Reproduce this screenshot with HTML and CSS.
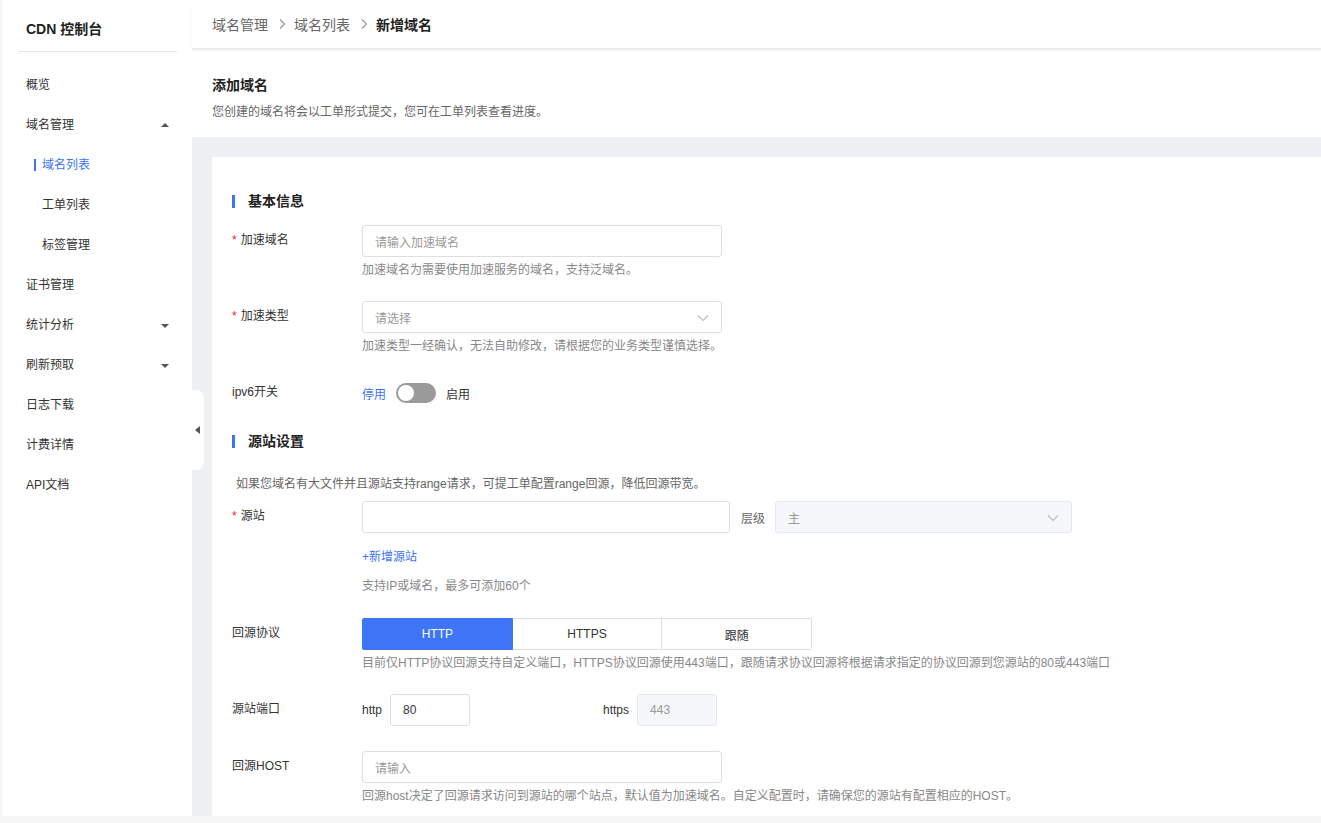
FILE: index.html
```html
<!DOCTYPE html>
<html lang="zh-CN">
<head>
<meta charset="utf-8">
<title>CDN 控制台 - 新增域名</title>
<link rel="stylesheet" href="styles.css">
</head>
<body>
<div class="app">
  <aside class="sidebar">
    <div class="brand">CDN 控制台</div>
    <nav class="menu">
      <div class="menu-item">概览</div>
      <div class="menu-item has-sub">域名管理<span class="tri tri-up"></span></div>
      <div class="sub-item active"><span class="bar"></span>域名列表</div>
      <div class="sub-item">工单列表</div>
      <div class="sub-item">标签管理</div>
      <div class="menu-item">证书管理</div>
      <div class="menu-item has-sub">统计分析<span class="tri tri-down"></span></div>
      <div class="menu-item has-sub">刷新预取<span class="tri tri-down"></span></div>
      <div class="menu-item">日志下载</div>
      <div class="menu-item">计费详情</div>
      <div class="menu-item">API文档</div>
    </nav>
    <div class="collapse-tab"><span class="tri-left"></span></div>
  </aside>
  <main class="main">
    <div class="breadcrumb">
      <span class="crumb">域名管理</span>
      <svg class="sep" width="8" height="12" viewBox="0 0 8 12"><path d="M2 1.5 L6.5 6 L2 10.5" fill="none" stroke="#999" stroke-width="1.2"/></svg>
      <span class="crumb">域名列表</span>
      <svg class="sep" width="8" height="12" viewBox="0 0 8 12"><path d="M2 1.5 L6.5 6 L2 10.5" fill="none" stroke="#999" stroke-width="1.2"/></svg>
      <span class="crumb current">新增域名</span>
    </div>
    <section class="page-head">
      <h1 class="page-title">添加域名</h1>
      <p class="page-desc">您创建的域名将会以工单形式提交，您可在工单列表查看进度。</p>
    </section>
    <section class="form-card">
      <h2 class="section-title">基本信息</h2>

      <div class="row">
        <div class="label"><span class="req">*</span>加速域名</div>
        <div class="ctrl">
          <div class="input w360"><span class="ph">请输入加速域名</span></div>
          <div class="help">加速域名为需要使用加速服务的域名，支持泛域名。</div>
        </div>
      </div>

      <div class="row">
        <div class="label"><span class="req">*</span>加速类型</div>
        <div class="ctrl">
          <div class="input w360 select"><span class="ph">请选择</span>
            <svg class="chev" width="12" height="8" viewBox="0 0 12 8"><path d="M1 1.5 L6 6.5 L11 1.5" fill="none" stroke="#b8bcc4" stroke-width="1.1"/></svg>
          </div>
          <div class="help">加速类型一经确认，无法自助修改，请根据您的业务类型谨慎选择。</div>
        </div>
      </div>

      <div class="row">
        <div class="label">ipv6开关</div>
        <div class="ctrl inline">
          <span class="sw-off">停用</span>
          <span class="switch"><span class="knob"></span></span>
          <span class="sw-on">启用</span>
        </div>
      </div>

      <h2 class="section-title second">源站设置</h2>
      <p class="info">如果您域名有大文件并且源站支持range请求，可提工单配置range回源，降低回源带宽。</p>

      <div class="row tight">
        <div class="label"><span class="req">*</span>源站</div>
        <div class="ctrl">
          <div class="inline">
            <div class="input w368"></div>
            <span class="level">层级</span>
            <div class="input w297 select disabled"><span class="val">主</span>
              <svg class="chev" width="12" height="8" viewBox="0 0 12 8"><path d="M1 1.5 L6 6.5 L11 1.5" fill="none" stroke="#b8bcc4" stroke-width="1.1"/></svg>
            </div>
          </div>
          <div class="add-link">+新增源站</div>
          <div class="help plain">支持IP或域名，最多可添加60个</div>
        </div>
      </div>

      <div class="row">
        <div class="label">回源协议</div>
        <div class="ctrl">
          <div class="btn-group">
            <span class="seg active">HTTP</span>
            <span class="seg">HTTPS</span>
            <span class="seg">跟随</span>
          </div>
          <div class="help">目前仅HTTP协议回源支持自定义端口，HTTPS协议回源使用443端口，跟随请求协议回源将根据请求指定的协议回源到您源站的80或443端口</div>
        </div>
      </div>

      <div class="row port-row">
        <div class="label">源站端口</div>
        <div class="ctrl inline">
          <span class="port-label">http</span>
          <div class="input w80"><span class="val dark">80</span></div>
          <span class="port-label https">https</span>
          <div class="input w80 disabled"><span class="val">443</span></div>
        </div>
      </div>

      <div class="row">
        <div class="label">回源HOST</div>
        <div class="ctrl">
          <div class="input w360"><span class="ph">请输入</span></div>
          <div class="help">回源host决定了回源请求访问到源站的哪个站点，默认值为加速域名。自定义配置时，请确保您的源站有配置相应的HOST。</div>
        </div>
      </div>
    </section>
  </main>
</div>
</body>
</html>
```

FILE: styles.css
```css
* { box-sizing: border-box; }
html, body { margin: 0; height: 100%; }
body {
  background: #f7f7f8;
  padding: 0 0 7px 3px;
  overflow: hidden;
  font-family: "Liberation Sans", Arial, "Noto Sans CJK SC", sans-serif;
  font-size: 12px;
  color: #333;
}
.app {
  display: flex;
  height: 816px;
}
.sidebar {
  position: relative;
  width: 189px;
  flex: none;
  background: #fff;
  padding: 0 15px;
}
.brand {
  height: 52px;
  line-height: 58px;
  padding-left: 8px;
  font-size: 14px;
  font-weight: bold;
  color: #222;
  border-bottom: 1px solid #e4e6eb;
}
.menu { padding-top: 13px; }
.menu-item, .sub-item {
  position: relative;
  height: 40px;
  line-height: 40px;
  padding-left: 8px;
  color: #333;
}
.sub-item { padding-left: 24px; }
.sub-item.active { color: #3d74f5; }
.sub-item .bar {
  position: absolute;
  left: 16px;
  top: 14px;
  width: 2px;
  height: 12px;
  background: #3d74f5;
}
.tri {
  position: absolute;
  right: 8px;
  top: 18px;
  width: 0; height: 0;
  border-left: 4px solid transparent;
  border-right: 4px solid transparent;
}
.tri-up { border-bottom: 4px solid #555; }
.tri-down { border-top: 4px solid #555; top: 19px; }
.collapse-tab {
  position: absolute;
  left: 189px;
  top: 390px;
  width: 12px;
  height: 80px;
  background: #fff;
  border-radius: 0 8px 8px 0;
  z-index: 2;
}
.tri-left {
  position: absolute;
  left: 3px;
  top: 36px;
  width: 0; height: 0;
  border-top: 4px solid transparent;
  border-bottom: 4px solid transparent;
  border-right: 5px solid #555;
}
.main {
  flex: 1;
  background: #eef0f4;
  display: flex;
  flex-direction: column;
  min-width: 0;
}
.breadcrumb {
  flex: none;
  height: 48px;
  background: #fff;
  display: flex;
  align-items: center;
  padding-left: 20px;
  font-size: 14px;
  box-shadow: 0 2px 4px rgba(0,0,0,0.03);
  position: relative;
  z-index: 1;
}
.crumb { color: #666; }
.crumb.current { color: #222; font-weight: bold; }
.sep { margin: 0 8px 0 10px; }
.page-head {
  flex: none;
  margin-top: 2px;
  background: #fff;
  padding: 26px 20px 16px;
}
.page-title {
  margin: 0;
  font-size: 14px;
  line-height: 18px;
  font-weight: bold;
  color: #222;
}
.page-desc {
  margin: 9px 0 0;
  line-height: 18px;
  color: #666;
}
.form-card {
  flex: 1;
  min-height: 0;
  overflow: hidden;
  margin: 20px 0 0 20px;
  background: #fff;
  padding: 34px 20px 0;
}
.section-title {
  margin: 0 0 14px;
  position: relative;
  padding-left: 16px;
  font-size: 14px;
  line-height: 20px;
  font-weight: bold;
  color: #222;
}
.section-title::before {
  content: "";
  position: absolute;
  left: 0;
  top: 4px;
  width: 3px;
  height: 13px;
  background: #3d74f5;
}
.section-title.second { margin-bottom: 0; }
.info {
  margin: 24px 0 8px 4px;
  line-height: 18px;
  color: #666;
}
.row {
  display: flex;
  margin-bottom: 22px;
}
.row.tight { margin-bottom: 23px; }
.row.port-row { margin-bottom: 25px; }
.label {
  width: 130px;
  flex: none;
  line-height: 30px;
  color: #333;
}
.req { color: #f5222d; margin-right: 4px; }
.ctrl { flex: none; }
.inline { display: flex; align-items: center; }
.ctrl.inline { height: 32px; }
.input {
  position: relative;
  height: 32px;
  border: 1px solid #dcdfe6;
  border-radius: 3px;
  background: #fff;
  display: flex;
  align-items: center;
  padding-left: 12px;
}
.w360 { width: 360px; }
.w368 { width: 368px; }
.w297 { width: 297px; }
.w80 { width: 80px; }
.ph { color: #999; }
.val { color: #999; }
.val.dark { color: #333; }
.input.disabled { background: #f5f7fa; border-color: #e4e7ed; }
.chev { position: absolute; right: 12px; top: 12px; }
.help {
  margin-top: 4px;
  line-height: 18px;
  color: #888;
}
.help.plain { margin-top: 11px; }
.level { margin: 0 10px 0 11px; color: #666; }
.add-link {
  margin-top: 15px;
  line-height: 18px;
  color: #3d74f5;
}
.sw-off { color: #3d74f5; }
.sw-on { color: #333; }
.switch {
  position: relative;
  width: 40px;
  height: 20px;
  border-radius: 10px;
  background: #9a9a9a;
  margin: 0 10px 0 10px;
}
.knob {
  position: absolute;
  left: 2px;
  top: 2px;
  width: 16px;
  height: 16px;
  border-radius: 50%;
  background: #fff;
}
.btn-group {
  display: flex;
  width: 450px;
  height: 32px;
}
.seg {
  flex: 1;
  display: flex;
  align-items: center;
  justify-content: center;
  border: 1px solid #dcdfe6;
  border-left: none;
  color: #333;
  background: #fff;
}
.seg:first-child { border-left: 1px solid #dcdfe6; border-radius: 2px 0 0 2px; }
.seg:last-child { border-radius: 0 2px 2px 0; }
.seg.active { background: #3e75f6; border-color: #3e75f6; color: #fff; }
.port-label { color: #333; margin-right: 8px; }
.port-label.https { margin-left: 133px; }
```
